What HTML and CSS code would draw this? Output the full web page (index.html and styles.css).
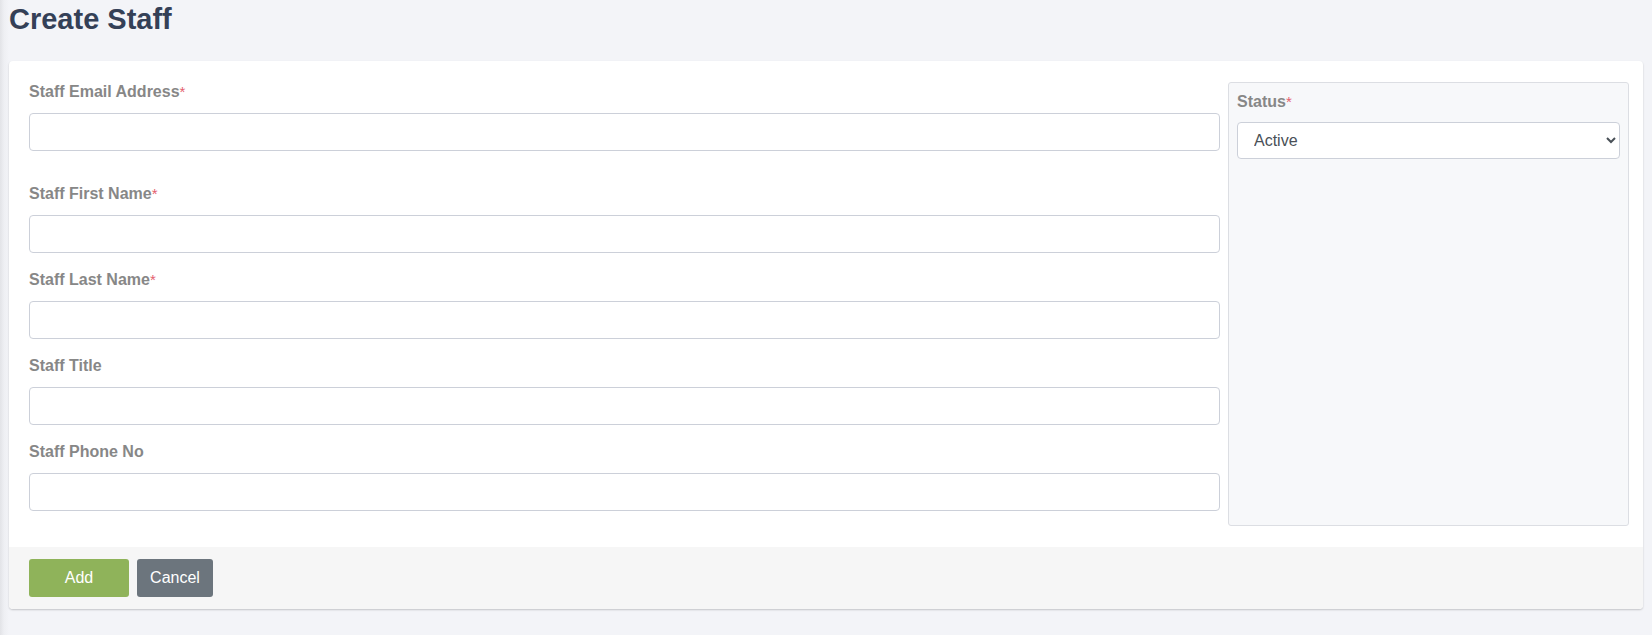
FILE: index.html
```html
<!DOCTYPE html>
<html lang="en">
  <head>
    <meta charset="UTF-8" />
    <meta name="viewport" content="width=device-width, initial-scale=1.0" />
    <title>Create Staff</title>
    <link rel="stylesheet" href="styles.css">
  </head>
  <body>
    <div class="page">
      <h1>Create Staff</h1>

      <form class="card">
        <div class="card-body">
          <div class="fields">
            <div class="group group-first">
              <label>Staff Email Address<span class="req">*</span></label>
              <input type="email" />
            </div>
            <div class="group">
              <label>Staff First Name<span class="req">*</span></label>
              <input type="text" />
            </div>
            <div class="group">
              <label>Staff Last Name<span class="req">*</span></label>
              <input type="text" />
            </div>
            <div class="group">
              <label>Staff Title</label>
              <input type="text" />
            </div>
            <div class="group group-last">
              <label>Staff Phone No</label>
              <input type="text" />
            </div>
          </div>

          <div class="side">
            <label>Status<span class="req">*</span></label>
            <select>
              <option>Active</option>
              <option>Inactive</option>
            </select>
          </div>
        </div>

        <div class="card-footer">
          <button type="submit" class="btn btn-add">Add</button>
          <button type="button" class="btn btn-cancel">Cancel</button>
        </div>
      </form>
    </div>
  </body>
</html>
```

FILE: styles.css
```css
body {
  font-family: "Liberation Sans", Arial, sans-serif;
  margin: 0;
  padding: 0;
  background-color: #f3f4f8;
  color: #333;
  min-height: 635px;
  background-image: linear-gradient(to right, #e2e3e7 0, #eeeff3 4px, #f3f4f8 9px);
}

.page {
  padding: 0 9px 0 9px;
}

h1 {
  margin: 0;
  padding-top: 2px;
  height: 59px;
  font-size: 29px;
  font-weight: bold;
  color: #344057;
  line-height: 34px;
}

.card {
  background-color: white;
  border-radius: 4px;
  box-shadow: 0 1px 2px rgba(0, 0, 0, 0.2);
  overflow: hidden;
}

.card-body {
  display: grid;
  grid-template-columns: 1fr 401px;
  gap: 8px;
  padding: 20px 14px 21px 20px;
}

label {
  display: block;
  font-size: 16px;
  font-weight: bold;
  color: #878787;
  line-height: 21px;
  margin-bottom: 11px;
}

.req {
  color: #e4606d;
  font-weight: normal;
  font-size: 15px;
}

.group {
  margin-bottom: 16px;
}

.group-first {
  margin-bottom: 32px;
}

.group-last {
  margin-bottom: 15px;
}

input,
select {
  display: block;
  box-sizing: border-box;
  width: 100%;
  height: 38px;
  padding: 6px 12px;
  border: 1px solid #ccd0d9;
  border-radius: 4px;
  background-color: white;
  font-family: inherit;
  font-size: 16px;
  color: #495057;
}

.side {
  background-color: #f7f8fa;
  border: 1px solid #dcdee3;
  border-radius: 3px;
  padding: 8px;
  margin-top: 1px;
}

.side label {
  margin-bottom: 10px;
}

.side select {
  height: 37px;
  padding-left: 12px;
}

.card-footer {
  background-color: #f6f6f6;
  padding: 12px 20px;
  display: flex;
  gap: 8px;
}

.btn {
  height: 38px;
  border: none;
  border-radius: 3px;
  color: white;
  font-family: inherit;
  font-size: 16px;
  cursor: pointer;
}

.btn-add {
  width: 100px;
  background-color: #8fb35a;
}

.btn-cancel {
  width: 76px;
  background-color: #6c757d;
}
```
